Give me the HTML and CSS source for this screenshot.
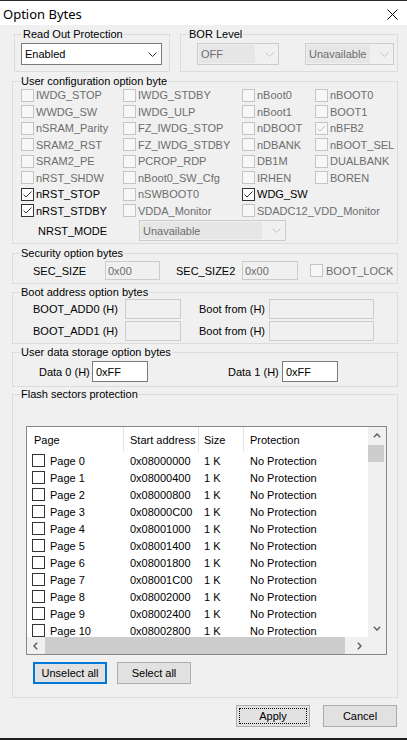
FILE: index.html
```html
<!DOCTYPE html>
<html>
<head>
<meta charset="utf-8">
<title>Option Bytes</title>
<link rel="stylesheet" href="styles.css">
</head>
<body>
<div class="window">
  <div class="topline"></div>
  <div class="titlebar">
    <span class="title">Option Bytes</span>
    <svg class="close" viewBox="0 0 11 11"><path d="M0.5 0.5 L10.5 10.5 M10.5 0.5 L0.5 10.5" stroke="#000" stroke-width="1" fill="none"/></svg>
  </div>

  <div class="content">
    <div class="row1">
      <div class="group g-rop">
        <span class="legend">Read Out Protection</span>
        <div class="combo w-rop"><span>Enabled</span><svg class="chev" viewBox="0 0 9 5"><path d="M0.5 0.5 L4.5 4.5 L8.5 0.5" stroke="#333" fill="none"/></svg></div>
      </div>
      <div class="group g-bor">
        <span class="legend">BOR Level</span>
        <div class="combo dis w-off"><span class="ctext">OFF</span><svg class="chev" viewBox="0 0 9 5"><path d="M0.5 0.5 L4.5 4.5 L8.5 0.5" stroke="#c4c4c4" fill="none"/></svg></div>
        <div class="combo dis w-unav"><span class="ctext">Unavailable</span><svg class="chev" viewBox="0 0 9 5"><path d="M0.5 0.5 L4.5 4.5 L8.5 0.5" stroke="#c4c4c4" fill="none"/></svg></div>
      </div>
    </div>

    <div class="group g-user">
      <span class="legend">User configuration option byte</span>
      <div class="cfg-grid">
        <div class="cbi"><span class="cb"></span>IWDG_STOP</div>
        <div class="cbi"><span class="cb"></span>IWDG_STDBY</div>
        <div class="cbi"><span class="cb"></span>nBoot0</div>
        <div class="cbi"><span class="cb"></span>nBOOT0</div>

        <div class="cbi"><span class="cb"></span>WWDG_SW</div>
        <div class="cbi"><span class="cb"></span>IWDG_ULP</div>
        <div class="cbi"><span class="cb"></span>nBoot1</div>
        <div class="cbi"><span class="cb"></span>BOOT1</div>

        <div class="cbi"><span class="cb"></span>nSRAM_Parity</div>
        <div class="cbi"><span class="cb"></span>FZ_IWDG_STOP</div>
        <div class="cbi"><span class="cb"></span>nDBOOT</div>
        <div class="cbi"><span class="cb"><svg viewBox="0 0 11 11"><path d="M1.5 5.5 L4 8 L9.5 2.5" stroke="#c0c0c0" fill="none"/></svg></span>nBFB2</div>

        <div class="cbi"><span class="cb"></span>SRAM2_RST</div>
        <div class="cbi"><span class="cb"></span>FZ_IWDG_STDBY</div>
        <div class="cbi"><span class="cb"></span>nDBANK</div>
        <div class="cbi"><span class="cb"></span>nBOOT_SEL</div>

        <div class="cbi"><span class="cb"></span>SRAM2_PE</div>
        <div class="cbi"><span class="cb"></span>PCROP_RDP</div>
        <div class="cbi"><span class="cb"></span>DB1M</div>
        <div class="cbi"><span class="cb"></span>DUALBANK</div>

        <div class="cbi"><span class="cb"></span>nRST_SHDW</div>
        <div class="cbi"><span class="cb"></span>nBoot0_SW_Cfg</div>
        <div class="cbi"><span class="cb"></span>IRHEN</div>
        <div class="cbi"><span class="cb"></span>BOREN</div>

        <div class="cbi on"><span class="cb"><svg viewBox="0 0 11 11"><path d="M1.5 5.5 L4 8 L9.5 2.5" stroke="#333" fill="none"/></svg></span>nRST_STOP</div>
        <div class="cbi"><span class="cb"></span>nSWBOOT0</div>
        <div class="cbi on"><span class="cb"><svg viewBox="0 0 11 11"><path d="M1.5 5.5 L4 8 L9.5 2.5" stroke="#333" fill="none"/></svg></span>WDG_SW</div>
        <div class="cbi empty"></div>

        <div class="cbi on"><span class="cb"><svg viewBox="0 0 11 11"><path d="M1.5 5.5 L4 8 L9.5 2.5" stroke="#333" fill="none"/></svg></span>nRST_STDBY</div>
        <div class="cbi"><span class="cb"></span>VDDA_Monitor</div>
        <div class="cbi span2"><span class="cb"></span>SDADC12_VDD_Monitor</div>
      </div>
      <div class="nrst-row">
        <span class="nrst-label">NRST_MODE</span>
        <div class="combo dis w-nrst"><span class="ctext">Unavailable</span><svg class="chev" viewBox="0 0 9 5"><path d="M0.5 0.5 L4.5 4.5 L8.5 0.5" stroke="#c4c4c4" fill="none"/></svg></div>
      </div>
    </div>

    <div class="group g-sec">
      <span class="legend">Security option bytes</span>
      <span class="lbl w-secl">SEC_SIZE</span>
      <div class="field dis w-sec">0x00</div>
      <span class="lbl w-sec2l">SEC_SIZE2</span>
      <div class="field dis w-sec2">0x00</div>
      <div class="cbi bootlock"><span class="cb"></span>BOOT_LOCK</div>
    </div>

    <div class="group g-boot">
      <span class="legend">Boot address option bytes</span>
      <div class="boot-row">
        <span class="lbl w-bal">BOOT_ADD0 (H)</span>
        <div class="field dis w-ba"></div>
        <span class="lbl w-bfl">Boot from (H)</span>
        <div class="field dis w-bf"></div>
      </div>
      <div class="boot-row">
        <span class="lbl w-bal">BOOT_ADD1 (H)</span>
        <div class="field dis w-ba"></div>
        <span class="lbl w-bfl">Boot from (H)</span>
        <div class="field dis w-bf"></div>
      </div>
    </div>

    <div class="group g-data">
      <span class="legend">User data storage option bytes</span>
      <span class="lbl w-d0l">Data 0 (H)</span>
      <div class="field w-d">0xFF</div>
      <span class="lbl w-d1l">Data 1 (H)</span>
      <div class="field w-d">0xFF</div>
    </div>

    <div class="group g-flash">
      <span class="legend">Flash sectors protection</span>
      <div class="list">
        <div class="list-main">
          <div class="lrow lhead">
            <div class="c1">Page</div>
            <div class="c2">Start address</div>
            <div class="c3">Size</div>
            <div class="c4">Protection</div>
          </div>
          <div class="lrow"><div class="c1"><span class="cb en"></span>Page 0</div><div class="c2">0x08000000</div><div class="c3">1 K</div><div class="c4">No Protection</div></div>
          <div class="lrow"><div class="c1"><span class="cb en"></span>Page 1</div><div class="c2">0x08000400</div><div class="c3">1 K</div><div class="c4">No Protection</div></div>
          <div class="lrow"><div class="c1"><span class="cb en"></span>Page 2</div><div class="c2">0x08000800</div><div class="c3">1 K</div><div class="c4">No Protection</div></div>
          <div class="lrow"><div class="c1"><span class="cb en"></span>Page 3</div><div class="c2">0x08000C00</div><div class="c3">1 K</div><div class="c4">No Protection</div></div>
          <div class="lrow"><div class="c1"><span class="cb en"></span>Page 4</div><div class="c2">0x08001000</div><div class="c3">1 K</div><div class="c4">No Protection</div></div>
          <div class="lrow"><div class="c1"><span class="cb en"></span>Page 5</div><div class="c2">0x08001400</div><div class="c3">1 K</div><div class="c4">No Protection</div></div>
          <div class="lrow"><div class="c1"><span class="cb en"></span>Page 6</div><div class="c2">0x08001800</div><div class="c3">1 K</div><div class="c4">No Protection</div></div>
          <div class="lrow"><div class="c1"><span class="cb en"></span>Page 7</div><div class="c2">0x08001C00</div><div class="c3">1 K</div><div class="c4">No Protection</div></div>
          <div class="lrow"><div class="c1"><span class="cb en"></span>Page 8</div><div class="c2">0x08002000</div><div class="c3">1 K</div><div class="c4">No Protection</div></div>
          <div class="lrow"><div class="c1"><span class="cb en"></span>Page 9</div><div class="c2">0x08002400</div><div class="c3">1 K</div><div class="c4">No Protection</div></div>
          <div class="lrow"><div class="c1"><span class="cb en"></span>Page 10</div><div class="c2">0x08002800</div><div class="c3">1 K</div><div class="c4">No Protection</div></div>
        </div>
        <div class="vscroll">
          <div class="sbtn"><svg class="arr" viewBox="0 0 8 5"><path d="M0.8 4.2 L4 1 L7.2 4.2" stroke="#606060" stroke-width="1.5" fill="none"/></svg></div>
          <div class="vthumb"></div>
          <div class="sfill"></div>
          <div class="sbtn"><svg class="arr" viewBox="0 0 8 5"><path d="M0.8 0.8 L4 4 L7.2 0.8" stroke="#606060" stroke-width="1.5" fill="none"/></svg></div>
        </div>
        <div class="hscroll">
          <div class="sbtn"><svg class="arrh" viewBox="0 0 5 8"><path d="M4.2 0.8 L1 4 L4.2 7.2" stroke="#606060" stroke-width="1.5" fill="none"/></svg></div>
          <div class="hthumb"></div>
          <div class="sfill"></div>
          <div class="sbtn"><svg class="arrh" viewBox="0 0 5 8"><path d="M0.8 0.8 L4 4 L0.8 7.2" stroke="#606060" stroke-width="1.5" fill="none"/></svg></div>
        </div>
        <div class="corner"></div>
      </div>
      <div class="list-btns">
        <button class="btn focus-blue">Unselect all</button>
        <button class="btn">Select all</button>
      </div>
    </div>
  </div>

  <div class="footer">
    <button class="btn default"><span class="focusrect">Apply</span></button>
    <button class="btn">Cancel</button>
  </div>
  <div class="bottomline"></div>
</div>
</body>
</html>
```

FILE: styles.css
```css
* { box-sizing: border-box; }
html, body { margin: 0; padding: 0; }
body {
  width: 407px;
  height: 740px;
  overflow: hidden;
  background: #f0f0f0;
  font-family: "Liberation Sans", Arial, sans-serif;
  font-size: 11px;
  color: #000;
}
.window { height: 740px; display: flex; flex-direction: column; }
.topline { height: 1px; background: #2b2630; flex: none; }
.titlebar {
  height: 24px; flex: none; background: #fff;
  display: flex; align-items: center; justify-content: space-between;
  padding: 0 9px 0 3px;
}
.title { font-family: "Noto Sans", sans-serif; font-size: 13px; line-height: 16px; margin-top: 1px; }
.close { width: 11px; height: 11px; display: block; margin-top: 2px; }

.content { padding: 0 9px 0 12px; }
.row1 { display: flex; margin-top: 9px; }

.group { position: relative; border: 1px solid #dcdcdc; }
.legend {
  position: absolute; top: -7px; left: 7px;
  padding: 0 1px; background: #f0f0f0; line-height: 13px; white-space: nowrap;
}

.g-rop { margin-left: 2px; width: 156px; height: 38px; padding: 8px 0 0 6px; }
.g-bor { margin-left: 10px; width: 218px; height: 38px; padding: 8px 0 0 16px; display: flex; gap: 26px; align-items: flex-start; }

.combo {
  height: 22px; display: flex; align-items: center; justify-content: space-between;
  padding: 0 4px 0 3px; border: 1px solid #7a7a7a; background: #fff; white-space: nowrap;
}
.combo.dis { border-color: #cccccc; background: #f0f0f0; color: #6d6d6d; padding-left: 1px; }
.combo.dis .ctext { background: #e6e6e6; align-self: stretch; display: flex; align-items: center; padding-left: 2px; flex: 1; margin: 1px 10px 1px 0; }
.chev { width: 9px; height: 5px; flex: none; display: block; }
.w-rop { width: 141px; }
.w-off { width: 82px; }
.w-unav { width: 89px; }

.g-user { margin-top: 9px; padding: 5px 0 2px 8px; }
.cfg-grid { display: grid; grid-template-columns: 102px 119px 73px 1fr; grid-auto-rows: 16.5px; }
.cbi { display: flex; align-items: center; gap: 2px; white-space: nowrap; color: #6d6d6d; }
.cbi.on { color: #000; }
.cbi.span2 { grid-column: span 2; }
.cb {
  width: 13px; height: 13px; flex: none; display: block;
  border: 1px solid #c4c4c4; background: #f7f7f7;
}
.cb svg { width: 11px; height: 11px; display: block; }
.cbi.on .cb, .cb.en { border-color: #333; background: #fff; }

.nrst-row { margin-top: 1px; height: 21px; display: flex; align-items: center; }
.nrst-label { margin-left: 17px; width: 101px; }
.w-nrst { width: 147px; height: 21px; }

.lbl { white-space: nowrap; flex: none; }
.field {
  flex: none; border: 1px solid #7a7a7a; background: #fff;
  display: flex; align-items: center; padding-left: 3px; white-space: nowrap;
}
.field.dis { border-color: #cccccc; background: #f0f0f0; color: #6d6d6d; padding-left: 2px; }

.g-sec { margin-top: 9px; padding: 7px 0 3px 20px; display: flex; align-items: center; }
.g-sec .field { height: 19px; }
.w-secl { width: 72px; }
.w-sec { width: 55px; }
.w-sec2l { margin-left: 16px; width: 66px; }
.w-sec2 { width: 56px; }
.bootlock { margin-left: 12px; gap: 3px; }

.g-boot { margin-top: 8px; padding: 6px 0 2px 20px; display: flex; flex-direction: column; gap: 2px; }
.boot-row { display: flex; align-items: center; height: 20px; }
.boot-row .field { height: 20px; }
.w-bal { width: 92px; }
.w-ba { width: 56px; }
.w-bfl { margin-left: 18px; width: 70px; }
.w-bf { width: 105px; }

.g-data { margin-top: 8px; padding: 8px 0 4px 26px; display: flex; align-items: center; }
.g-data .field { height: 21px; }
.w-d0l { width: 53px; }
.w-d { width: 56px; }
.w-d1l { margin-left: 80px; width: 54px; }

.g-flash { margin-top: 7px; padding: 31px 0 13px 13px; }
.list {
  width: 361px; height: 229px; border: 1px solid #828790; background: #fff;
  display: grid; grid-template-columns: 341px 18px; grid-template-rows: 210px 17px;
  overflow: hidden;
}
.list-main { overflow: hidden; background: #fff; }
.lrow { display: grid; grid-template-columns: 97px 75px 45px 1fr; height: 17px; white-space: nowrap; }
.lrow > div { display: flex; align-items: center; overflow: hidden; }
.lhead { height: 25px; }
.lhead > div { border-right: 1px solid #e5e5e5; }
.lhead > .c4 { border-right: none; }
.c1 { padding-left: 7px; }
.c2 { padding-left: 6px; }
.c3 { padding-left: 5px; }
.c4 { padding-left: 6px; }
.lrow:not(.lhead) .c1 { padding-left: 5px; gap: 5px; }

.vscroll { background: #f0f0f0; display: flex; flex-direction: column; }
.vscroll .sbtn { height: 17px; flex: none; display: flex; align-items: center; justify-content: center; }
.vthumb { height: 17px; margin: 1px 2px 0 0; background: #cdcdcd; flex: none; }
.sfill { flex: 1; }
.arr { width: 8px; height: 5px; display: block; }
.hscroll { background: #f0f0f0; display: flex; }
.hscroll .sbtn { width: 17px; flex: none; display: flex; align-items: center; justify-content: center; }
.hthumb { width: 300px; margin-left: 1px; background: #cdcdcd; flex: none; }
.arrh { width: 5px; height: 8px; display: block; }
.corner { background: #f0f0f0; }

.list-btns { display: flex; gap: 10px; margin: 7px 0 0 7px; }
.btn {
  width: 74px; height: 22px; padding: 0; margin: 0;
  background: #e1e1e1; border: 1px solid #adadad;
  font-family: "Liberation Sans", Arial, sans-serif; font-size: 11px; color: #000;
  display: flex; align-items: center; justify-content: center;
}
.btn.focus-blue { border: 2px solid #0078d7; }
.btn.default { padding: 2px; }
.focusrect {
  flex: 1; align-self: stretch; border: 1px dotted #000;
  display: flex; align-items: center; justify-content: center;
}

.footer { display: flex; justify-content: flex-end; gap: 13px; margin-top: 7px; padding-right: 10px; }
.bottomline { margin-top: auto; height: 2px; background: #1e1e1e; flex: none; }
```
